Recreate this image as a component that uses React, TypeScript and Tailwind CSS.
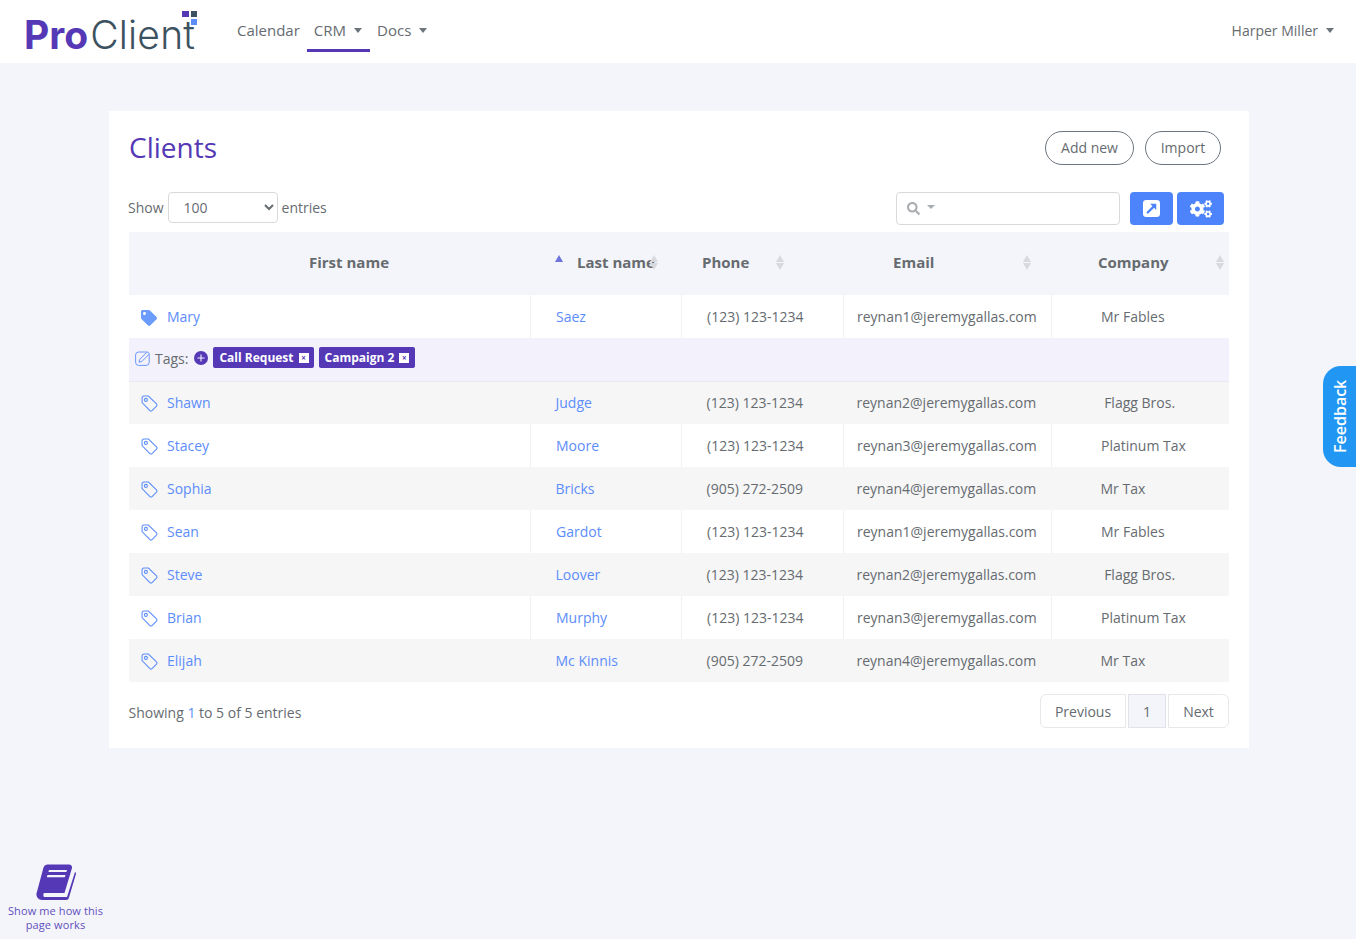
import React from "react";
import { FaTag, FaCogs, FaSearch } from "react-icons/fa";

const rows = [
  ["Shawn", "Judge", "(123) 123-1234", "reynan2@jeremygallas.com", "\u00a0Flagg Bros."],
  ["Stacey", "Moore", "(123) 123-1234", "reynan3@jeremygallas.com", "Platinum Tax"],
  ["Sophia", "Bricks", "(905) 272-2509", "reynan4@jeremygallas.com", "Mr Tax"],
  ["Sean", "Gardot", "(123) 123-1234", "reynan1@jeremygallas.com", "Mr Fables"],
  ["Steve", "Loover", "(123) 123-1234", "reynan2@jeremygallas.com", "\u00a0Flagg Bros."],
  ["Brian", "Murphy", "(123) 123-1234", "reynan3@jeremygallas.com", "Platinum Tax"],
  ["Elijah", "Mc Kinnis", "(905) 272-2509", "reynan4@jeremygallas.com", "Mr Tax"],
];

function Sort({ className }: { className: string }) {
  return (
    <span className={"absolute top-[23px] flex flex-col gap-[1px] " + className}>
      <span className="w-0 h-0 border-x-[4px] border-x-transparent border-b-[7px] border-b-[#d7d9de]" />
      <span className="w-0 h-0 border-x-[4px] border-x-transparent border-t-[7px] border-t-[#d7d9de]" />
    </span>
  );
}

function Caret() {
  return <span className="inline-block w-0 h-0 ml-2 align-[3px] border-x-[4.5px] border-x-transparent border-t-[5px] border-t-[#6c757d]" />;
}

function TagOutline() {
  return (
    <svg viewBox="0 0 16 16" className="w-[17px] h-[17px] mt-[1px]" fill="none" stroke="currentColor" strokeWidth="1">
      <path d="M1 2.6A1.6 1.6 0 0 1 2.6 1H7L14.6 8.4a1.4 1.4 0 0 1 0 2L10.4 14.6a1.4 1.4 0 0 1-2 0L1 7.2Z" />
      <circle cx="4.6" cy="4.6" r="1.4" />
    </svg>
  );
}

function Row({ r, striped, filled }: { r: string[]; striped: boolean; filled?: boolean }) {
  const bg = striped ? "bg-[#f6f6f7]" : "bg-white";
  const br = striped ? "" : "border-r border-r-[#f1f1f3]";
  return (
    <tr className={"h-[43px] " + bg}>
      <td className={"pl-[12px] " + br}>
        <div className="flex items-center text-[#5c8dfa]">
          {filled ? <FaTag className="w-[16px] h-[16px] mt-[2px] mr-[1px] text-[#6b9bfb]" /> : <TagOutline />}
          <a className="ml-[9px]">{r[0]}</a>
        </div>
      </td>
      <td className={"pl-[25.5px] text-[#5c8dfa] " + br}>{r[1]}</td>
      <td className={"pl-[25.5px] " + br}>{r[2]}</td>
      <td className={"pl-[13.5px] " + br}>{r[3]}</td>
      <td className="pl-[49.5px]">{r[4]}</td>
    </tr>
  );
}

function Chip({ label, pr }: { label: string; pr: string }) {
  return (
    <span className={"ml-[5px] mb-[2px] h-[21px] pl-[6px] pt-[1px] rounded-[2px] bg-[#5438b5] text-white text-[12px] font-bold flex items-center " + pr}>
      {label}
      <span className="ml-[5px] w-[10px] h-[10px] bg-white text-[#5438b5] text-[8px] leading-[10px] text-center">×</span>
    </span>
  );
}

export default function App() {
  return (
    <div className="relative min-h-[939px] bg-[#f4f5fb] font-['Open_Sans',sans-serif] text-[14px] text-[#666b70] overflow-hidden">
      <header className="h-[63px] bg-white flex items-start pl-[24px] pr-[22px]">
        <div className="relative w-[172px] h-[63px] flex items-baseline font-['Inter',sans-serif] text-[39px] leading-none pt-[15px]">
          <span className="font-bold text-[#5438b5]">Pro</span>
          <span className="font-light text-[#3d5260] ml-[2px] tracking-[0.2px]">Client</span>
          <span className="absolute top-[11px] left-[158px] grid grid-cols-2 gap-[2px] w-[15px]">
            <span className="h-[6px] w-[7px] bg-[#5438b5]" />
            <span className="h-[6px] w-[6px] bg-[#3d5260]" />
            <span className="h-[6px] w-[7px]" />
            <span className="h-[6px] w-[6px] bg-[#5c8dfa]" />
          </span>
        </div>
        <nav className="flex items-center ml-[41px] text-[15px] h-[52px] pt-[8px]">
          <a>Calendar</a>
          <a className="ml-[7px] h-[44px] pl-[7px] pr-[8px] pt-[3px] flex items-center border-b-[3px] border-b-[#5438b5]">CRM<Caret /></a>
          <a className="ml-[7px]">Docs<Caret /></a>
        </nav>
        <div className="ml-auto h-[52px] pt-[8px] flex items-center">
          <span>Harper Miller<Caret /></span>
        </div>
      </header>

      <main className="ml-[109px] mt-[48px] w-[1140px] h-[637px] bg-white pt-[20px] px-[20px]">
        <div className="flex items-center justify-between h-[34px] pr-[8px]">
          <h1 className="text-[28px] leading-none text-[#5438b5] -mt-[2px]">Clients</h1>
          <div className="flex gap-[11px]">
            <button className="h-[34px] w-[89px] pb-[1px] rounded-full border border-[#6c757d]">Add new</button>
            <button className="h-[34px] w-[76px] pb-[1px] rounded-full border border-[#6c757d]">Import</button>
          </div>
        </div>

        <div className="flex items-start h-[33px] mt-[27px] -ml-[1px] pr-[5px]">
          <span className="leading-[31px]">Show</span>
          <select className="ml-[4px] w-[110px] h-[31px] pl-[11px] rounded-[4px] border border-[#d9d9d9] bg-white" defaultValue="100">
            <option>100</option>
          </select>
          <span className="ml-[4px] leading-[31px]">entries</span>
          <div className="ml-auto w-[224px] h-[33px] rounded-[4px] border border-[#d9d9d9] flex items-center pl-[10px] text-[#a9acb0]">
            <FaSearch className="w-[13px] h-[13px]" />
            <span className="ml-[7px] mb-[3px] w-0 h-0 border-x-[4px] border-x-transparent border-t-[4px] border-t-[#a9acb0]" />
          </div>
          <button className="ml-[10px] w-[43px] h-[33px] rounded-[4px] bg-[#4d84fb] flex items-center justify-center">
            <svg viewBox="0 0 18 18" className="w-[17px] h-[17px]">
              <rect width="18" height="18" rx="3.5" fill="#fff" />
              <path d="M5 13.2L11.5 6.7" stroke="#4d84fb" strokeWidth="2.4" strokeLinecap="round" />
              <path d="M7.5 4H14V10.5Z" fill="#4d84fb" />
            </svg>
          </button>
          <button className="ml-[4px] w-[47px] h-[33px] rounded-[4px] bg-[#4d84fb] flex items-center justify-center text-white">
            <FaCogs className="w-[22px] h-[22px]" />
          </button>
        </div>

        <table className="mt-[7px] w-[1100px] table-fixed border-collapse">
          <colgroup>
            <col className="w-[401px]" />
            <col className="w-[151px]" />
            <col className="w-[162px]" />
            <col className="w-[208px]" />
            <col className="w-[178px]" />
          </colgroup>
          <thead>
            <tr className="h-[63px] bg-[#f4f5fa] text-[15px] font-bold text-left">
              <th className="relative pl-[180px] pb-[2px]">First name</th>
              <th className="relative pl-[47px] pb-[2px] whitespace-nowrap">
                Last name
                <span className="absolute left-[25px] top-[23px] w-0 h-0 border-x-[4px] border-x-transparent border-b-[7px] border-b-[#6f74dd]" />
                <Sort className="left-[120px]" />
              </th>
              <th className="relative pl-[21px] pb-[2px]">Phone<Sort className="left-[95px]" /></th>
              <th className="relative pl-[50px] pb-[2px]">Email<Sort className="left-[180px]" /></th>
              <th className="relative pl-[47px] pb-[2px]">Company<Sort className="left-[165px]" /></th>
            </tr>
          </thead>
          <tbody>
            <Row r={["Mary", "Saez", "(123) 123-1234", "reynan1@jeremygallas.com", "Mr Fables"]} striped={false} filled />
            <tr className="h-[43px] bg-[#f3f2fc] border-b border-b-[#e9e9f2]">
              <td colSpan={5} className="pl-[6px]">
                <div className="flex items-center mb-[2px]">
                  <svg viewBox="0 0 16 16" className="w-[16px] h-[16px] text-[#5c8dfa]" fill="none" stroke="currentColor" strokeWidth="0.9">
                    <rect x="0.6" y="2" width="13.6" height="13.4" rx="3" />
                    <path d="M4 12.2l.7-2.8L11.6 2.5a1.2 1.2 0 0 1 1.7 0l.4.4a1.2 1.2 0 0 1 0 1.7L6.8 11.5Z" fill="#f3f2fc" />
                  </svg>
                  <span className="ml-[4px]">Tags:</span>
                  <svg viewBox="0 0 14 14" className="ml-[6px] w-[14px] h-[14px]">
                    <circle cx="7" cy="7" r="7" fill="#5438b5" />
                    <path d="M7 3.4v7.2M3.4 7h7.2" stroke="#f3f2fc" strokeWidth="1.1" />
                  </svg>
                  <Chip label="Call Request" pr="pr-[5px]" />
                  <Chip label="Campaign 2" pr="pr-[6px]" />
                </div>
              </td>
            </tr>
            {rows.map((r, i) => (
              <Row key={i} r={r} striped={i % 2 === 0} />
            ))}
          </tbody>
        </table>

        <div className="flex items-center justify-between mt-[12px] -ml-[0.5px]">
          <span className="mt-[2px]">Showing <span className="text-[#5c8dfa]">1</span> to 5 of 5 entries</span>
          <div className="flex gap-[2px] h-[34px]">
            <button className="w-[86px] rounded-l-[6px] border border-[#e8e8e8]">Previous</button>
            <button className="w-[38px] border border-[#e2e3e8] bg-[#f4f5fa]">1</button>
            <button className="w-[61px] rounded-r-[6px] border border-[#e8e8e8]">Next</button>
          </div>
        </div>
      </main>

      <a className="absolute right-0 top-[366px] w-[33px] h-[101px] rounded-r-[18px] bg-[#2196f3] text-white text-[16px] font-semibold flex items-center justify-center [writing-mode:vertical-rl] rotate-180">
        Feedback
      </a>

      <a className="absolute left-0 top-[864px] w-[111px] flex flex-col items-center text-[11px] leading-[14px] text-[#5f4fbb] text-center">
        <svg viewBox="0 0 40 37" className="w-[40px] h-[37px] text-[#5438b5] -mb-[1px]">
          <path fill="currentColor" d="M11 0.5H33a3 3 0 0 1 3 3.5L28.5 29H8a3.5 3.5 0 0 0 0 4h23L39 8a2 2 0 0 1 .8 2.5L33 33.5a3 3 0 0 1-3 2.5H6a5.5 5.5 0 0 1-5.5-6.5L7.5 3.5A4 4 0 0 1 11 .5z" />
          <path fill="#f4f5fb" d="M13 6h18l-.6 2H12.4zM11.5 11h18l-.7 2.2H10.8z" />
        </svg>
        <span className="mt-[4px] w-[100px] tracking-[0.01em]">Show me how this page works</span>
      </a>
    </div>
  );
}
